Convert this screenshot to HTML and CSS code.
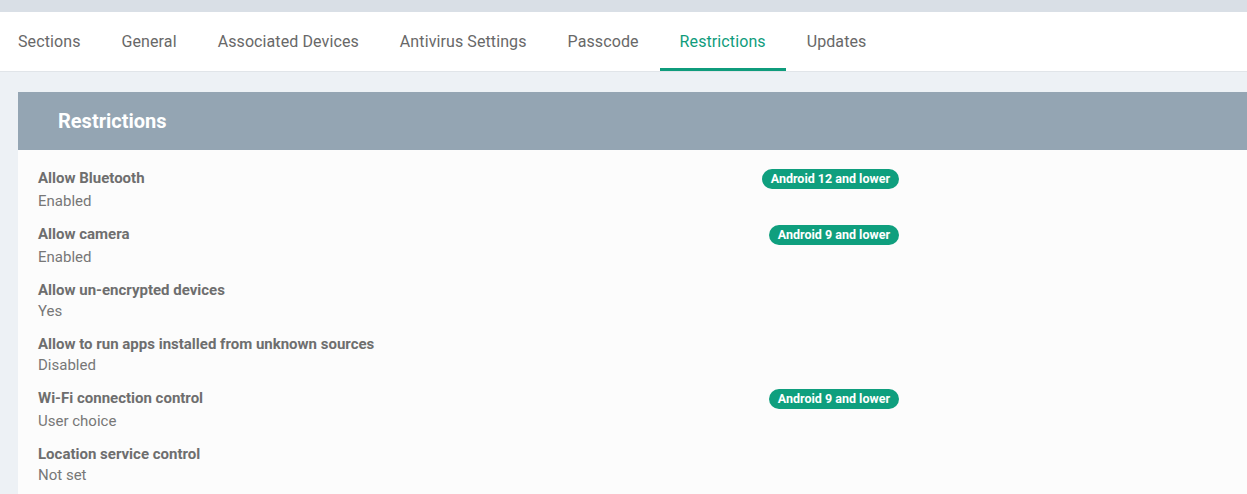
FILE: index.html
```html
<!DOCTYPE html>
<html>
<head>
<meta charset="utf-8">
<link rel="stylesheet" href="styles.css">
</head>
<body>
<div class="topbar"></div>
<nav class="tabs">
  <a class="tab">Sections</a>
  <a class="tab">General</a>
  <a class="tab">Associated Devices</a>
  <a class="tab">Antivirus Settings</a>
  <a class="tab">Passcode</a>
  <a class="tab active">Restrictions</a>
  <a class="tab">Updates</a>
</nav>
<main class="content">
  <section class="card">
    <header class="card-head">Restrictions</header>
    <div class="card-body">
      <div class="row">
        <div class="row-head"><span class="label">Allow Bluetooth</span><span class="badge">Android 12 and lower</span></div>
        <div class="value">Enabled</div>
      </div>
      <div class="row">
        <div class="row-head"><span class="label">Allow camera</span><span class="badge">Android 9 and lower</span></div>
        <div class="value">Enabled</div>
      </div>
      <div class="row">
        <div class="row-head"><span class="label">Allow un-encrypted devices</span></div>
        <div class="value">Yes</div>
      </div>
      <div class="row">
        <div class="row-head"><span class="label">Allow to run apps installed from unknown sources</span></div>
        <div class="value">Disabled</div>
      </div>
      <div class="row">
        <div class="row-head"><span class="label">Wi-Fi connection control</span><span class="badge">Android 9 and lower</span></div>
        <div class="value">User choice</div>
      </div>
      <div class="row">
        <div class="row-head"><span class="label">Location service control</span></div>
        <div class="value">Not set</div>
      </div>
    </div>
  </section>
</main>
</body>
</html>
```

FILE: styles.css
```css
* { box-sizing: border-box; }
html, body {
  margin: 0;
  padding: 0;
  background: #edf1f5;
  font-family: Roboto, "Liberation Sans", sans-serif;
  overflow: hidden;
}
.topbar {
  height: 12px;
  background: #d9dfe6;
}
.tabs {
  display: flex;
  gap: 1px;
  height: 60px;
  background: #ffffff;
  border-bottom: 1px solid #e1e5e9;
}
.tab {
  display: flex;
  align-items: center;
  padding: 0 20px;
  font-size: 16px;
  letter-spacing: 0.1px;
  color: #686868;
  border-bottom: 3px solid transparent;
  padding-top: 3px;
}
.tab:first-child { padding-left: 18px; }
.tab.active {
  color: #0f9c7c;
  border-bottom-color: #0f9c7c;
}
.content {
  padding: 20px 0 0 18px;
}
.card {
  background: #fcfcfc;
}
.card-head {
  height: 58px;
  display: flex;
  align-items: center;
  padding-left: 40px;
  background: #94a5b3;
  color: #ffffff;
  font-size: 20px;
  font-weight: 700;
}
.card-body {
  padding: 18px 20px 20px;
  display: flex;
  flex-direction: column;
  gap: 12px;
}
.row {
  width: 861px;
}
.row-head {
  display: flex;
  justify-content: space-between;
  align-items: flex-start;
}
.label {
  font-size: 15px;
  line-height: 21px;
  font-weight: 700;
  color: #6e6e6e;
}
.badge {
  margin: 1px 0 2px;
  height: 20px;
  line-height: 20px;
  padding: 0 9px;
  border-radius: 10px;
  background: #0f9f7e;
  color: #ffffff;
  font-size: 12.5px;
  font-weight: 700;
}
.value {
  font-size: 15px;
  line-height: 21px;
  color: #777777;
}
```
